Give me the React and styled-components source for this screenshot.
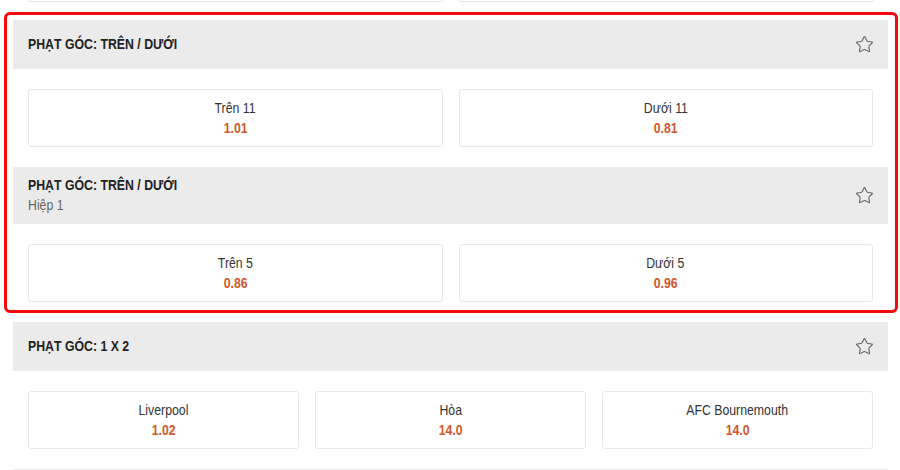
import styled, { createGlobalStyle } from 'styled-components';
import { Star } from 'lucide-react';

const GlobalStyle = createGlobalStyle`
  body {
    margin: 0;
    background: #fff;
    font-family: "Liberation Sans", Arial, sans-serif;
  }
`;

const Page = styled.div`
  width: 900px;
  height: 470px;
  overflow: hidden;
  box-sizing: border-box;
  padding: 0 12px 0 13px;
`;

const Highlight = styled.div`
  margin: 10px -10px 9px -9px;
  border: 3px solid #f40a0a;
  border-radius: 6px;
  padding: 5px 7px 0 6px;
`;

const Header = styled.div`
  display: flex;
  align-items: center;
  justify-content: space-between;
  min-height: 49px;
  box-sizing: border-box;
  padding: 8px 14px 9px 15px;
  background: #ebebeb;
`;

const Titles = styled.div`
  display: flex;
  flex-direction: column;
  align-items: flex-start;
`;

/* the site uses a narrow face; squeeze Liberation Sans to its width */
const Narrow = styled.div`
  font-size: 15px;
  line-height: 20px;
  transform: scaleX(0.82);
  transform-origin: ${p => (p.$center ? 'center' : 'left')};
  white-space: nowrap;
`;

const Title = styled(Narrow)`
  font-weight: 700;
  color: #222;
`;

const Subtitle = styled(Narrow)`
  color: #666;
`;

const FavIcon = styled(Star)`
  color: #666;
  flex-shrink: 0;
`;

const Body = styled.div`
  padding: ${p => (p.$tight ? '20px 15px 8px' : '20px 15px')};
  display: grid;
  grid-template-columns: repeat(${p => p.$cols}, 1fr);
  gap: 16px;
`;

const PrevRow = styled.div`
  padding: 0 15px;
  display: grid;
  grid-template-columns: 1fr 1fr;
  gap: 16px;
`;

const PrevCell = styled.div`
  height: 1px;
  border: 1px solid #e6e6e6;
  border-top: none;
  border-radius: 0 0 3px 3px;
`;

const OddButton = styled.div`
  display: flex;
  flex-direction: column;
  align-items: center;
  padding: 8px 0 10px;
  border: 1px solid #e8e8e8;
  border-radius: 3px;
  background: #fff;
  box-sizing: border-box;
  height: 58px;
`;

const Label = styled(Narrow)`
  color: #333;
`;

const Price = styled(Narrow)`
  font-weight: 700;
  color: #d2572a;
`;

const NextHeader = styled.div`
  height: 20px;
  background: #ebebeb;
`;

const Market = ({ title, subtitle, odds, tight }) => (
  <section>
    <Header>
      <Titles>
        <Title>{title}</Title>
        {subtitle && <Subtitle>{subtitle}</Subtitle>}
      </Titles>
      <FavIcon size={19} strokeWidth={1.4} />
    </Header>
    <Body $cols={odds.length} $tight={tight}>
      {odds.map(o => (
        <OddButton key={o.label}>
          <Label $center>{o.label}</Label>
          <Price $center>{o.price}</Price>
        </OddButton>
      ))}
    </Body>
  </section>
);

export default function App() {
  return (
    <Page>
      <GlobalStyle />
      <PrevRow>
        <PrevCell />
        <PrevCell />
      </PrevRow>
      <Highlight>
        <Market
          title="PHẠT GÓC: TRÊN / DƯỚI"
          odds={[
            { label: 'Trên 11', price: '1.01' },
            { label: 'Dưới 11', price: '0.81' },
          ]}
        />
        <Market
          title="PHẠT GÓC: TRÊN / DƯỚI"
          subtitle="Hiệp 1"
          tight
          odds={[
            { label: 'Trên 5', price: '0.86' },
            { label: 'Dưới 5', price: '0.96' },
          ]}
        />
      </Highlight>
      <Market
        title="PHẠT GÓC: 1 X 2"
        odds={[
          { label: 'Liverpool', price: '1.02' },
          { label: 'Hòa', price: '14.0' },
          { label: 'AFC Bournemouth', price: '14.0' },
        ]}
      />
      <NextHeader />
    </Page>
  );
}
